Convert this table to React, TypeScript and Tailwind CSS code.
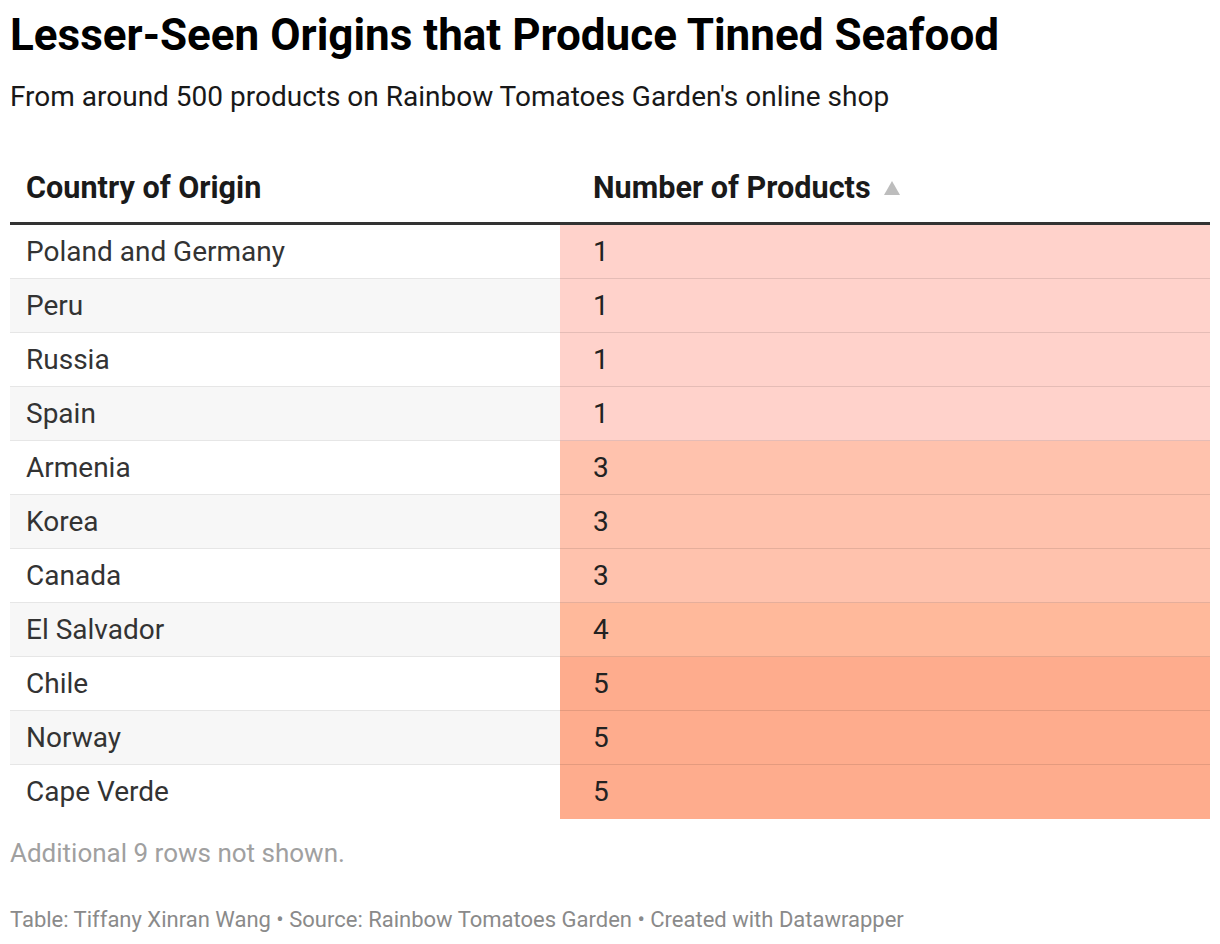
import React from "react";

const rows: [string, number][] = [
  ["Poland and Germany", 1],
  ["Peru", 1],
  ["Russia", 1],
  ["Spain", 1],
  ["Armenia", 3],
  ["Korea", 3],
  ["Canada", 3],
  ["El Salvador", 4],
  ["Chile", 5],
  ["Norway", 5],
  ["Cape Verde", 5],
];

const colorFor: Record<number, string> = {
  1: "bg-[#ffd2cb]",
  3: "bg-[#ffc2ad]",
  4: "bg-[#ffb99b]",
  5: "bg-[#feac8d]",
};

export default function App() {
  return (
    <div className="w-[1220px] h-[944px] bg-white px-[10px] font-['Roboto',sans-serif] text-[#1a1a1a]">
      <h1 className="pt-[10px] text-[44px] leading-[50px] font-bold text-black">
        Lesser-Seen Origins that Produce Tinned Seafood
      </h1>
      <p className="mt-[20px] text-[28px] leading-[34px] text-[#181818]">
        From around 500 products on Rainbow Tomatoes Garden's online shop
      </p>
      <div className="mt-[56px]">
        <div className="flex pb-[16px] border-b-[3px] border-[#333333]">
          <div className="w-[550px] pl-[16px] text-[30.6px] font-bold leading-[36px] text-[#1a1a1a]">
            Country of Origin
          </div>
          <div className="flex-1 pl-[33px] text-[30.6px] font-bold leading-[36px] text-[#1a1a1a] flex items-center gap-[13px]">
            <span>Number of Products</span>
            <svg width="16" height="14" viewBox="0 0 16 14">
              <polygon points="8,0 16,14 0,14" fill="#bdbdbd" />
            </svg>
          </div>
        </div>
        {rows.map(([name, n], i) => {
          const last = i === rows.length - 1;
          return (
            <div key={name} className="flex h-[54px]">
              <div
                className={`w-[550px] pl-[16px] text-[28px] leading-[53px] text-[#333333] ${
                  last ? "" : "border-b border-[#e6e6e6]"
                } ${i % 2 === 1 ? "bg-[#f7f7f7]" : "bg-white"}`}
              >
                {name}
              </div>
              <div
                className={`flex-1 pl-[33px] text-[28px] leading-[53px] text-[#222222] ${colorFor[n]} ${
                  last ? "" : "border-b border-[#0000001a]"
                }`}
              >
                {n}
              </div>
            </div>
          );
        })}
      </div>
      <p className="mt-[17px] text-[26px] leading-[34px] text-[#a0a0a0]">
        Additional 9 rows not shown.
      </p>
      <p className="mt-[36px] text-[22px] leading-[28px] text-[#8a8a8a]">
        Table: Tiffany Xinran Wang • Source: Rainbow Tomatoes Garden • Created with Datawrapper
      </p>
    </div>
  );
}
